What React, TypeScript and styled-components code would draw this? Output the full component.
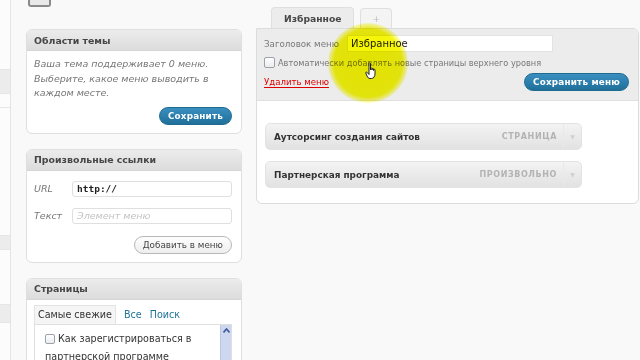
import styled, { createGlobalStyle, css } from 'styled-components';

const GlobalStyle = createGlobalStyle`
  html, body {
    margin: 0;
    padding: 0;
    background: #f9f9f9;
  }
  body {
    font-family: "DejaVu Sans", "Liberation Sans", sans-serif;
    color: #333;
  }
  * {
    box-sizing: border-box;
  }
`;

const Page = styled.div`
  position: relative;
  width: 640px;
  height: 360px;
  overflow: hidden;
  display: flex;
  background: #f9f9f9;
`;

// обрезанное левое меню админки
const AdminMenu = styled.div`
  width: 11px;
  flex-shrink: 0;
  display: flex;
  flex-direction: column;
  background: #fcfcfc;
  border-right: 1px solid #e4e4e4;
`;

const MenuItem = styled.div<{ h: number; dark?: boolean }>`
  height: ${({ h }) => h}px;
  flex-shrink: 0;
  border-bottom: 1px solid #e6e6e6;
  ${({ dark }) =>
    dark &&
    css`
      background: #ececec;
    `}
`;

const Columns = styled.div`
  flex: 1;
  padding-left: 15px;
  display: flex;
  gap: 14px;
`;

const LeftColumn = styled.div`
  width: 216px;
  display: flex;
  flex-direction: column;
  gap: 15px;
`;

// иконка заголовка страницы, видна только нижняя часть
const HeadingIcon = styled.div`
  width: 23px;
  height: 7px;
  flex-shrink: 0;
  margin-left: 2px;
  margin-bottom: 7px;
  border: 2px solid #8a8a8a;
  border-top: none;
  border-radius: 0 0 3px 3px;
  background: #e9e9e9;
`;

const Box = styled.div`
  flex-shrink: 0;
  border: 1px solid #dfdfdf;
  border-radius: 6px;
  background: #fff;
  overflow: hidden;
`;

const BoxHeader = styled.div`
  height: 21px;
  padding: 0 7px;
  display: flex;
  align-items: center;
  background: linear-gradient(#ececec, #dcdcdc);
  border-bottom: 1px solid #d6d6d6;
  font-size: 9.4px;
  font-weight: bold;
  color: #464646;
`;

const BoxBody = styled.div<{ pad: string }>`
  padding: ${({ pad }) => pad};
  display: flex;
  flex-direction: column;
`;

const Note = styled.p`
  margin: 0;
  font-size: 9.5px;
  line-height: 14.5px;
  font-style: italic;
  color: #777;
`;

const ButtonRow = styled.div<{ top: number }>`
  display: flex;
  justify-content: flex-end;
  margin-top: ${({ top }) => top}px;
`;

const Button = styled.button<{ primary?: boolean }>`
  height: 18px;
  padding: 0 8px;
  border-radius: 10px;
  font-family: inherit;
  font-size: 8.8px;
  display: flex;
  align-items: center;
  ${({ primary }) =>
    primary
      ? css`
          background: linear-gradient(#3a8fc0, #1f6f99);
          border: 1px solid #1f6a91;
          color: #fff;
          font-weight: bold;
          letter-spacing: 0.2px;
        `
      : css`
          background: linear-gradient(#fefefe, #eeeeee);
          border: 1px solid #b8b8b8;
          color: #464646;
        `}
`;

const FieldRow = styled.div`
  display: flex;
  align-items: center;
  height: 16px;
  & + & {
    margin-top: 11px;
  }
`;

const FieldLabel = styled.span`
  width: 38px;
  font-size: 9.5px;
  font-style: italic;
  color: #777;
`;

const Field = styled.div<{ mono?: boolean; placeholder?: boolean }>`
  flex: 1;
  height: 16px;
  border: 1px solid #dfdfdf;
  border-radius: 3px;
  display: flex;
  align-items: center;
  padding: 0 4px;
  font-size: 9.5px;
  ${({ mono }) =>
    mono &&
    css`
      font-family: "DejaVu Sans Mono", monospace;
      font-weight: bold;
      color: #222;
    `}
  ${({ placeholder }) =>
    placeholder &&
    css`
      font-style: italic;
      color: #c3c3c3;
    `}
`;

const Tabs = styled.div`
  display: flex;
  align-items: flex-end;
  gap: 8px;
  height: 19px;
  font-size: 9.6px;
`;

const PageTab = styled.span<{ active?: boolean }>`
  height: 19px;
  display: flex;
  align-items: center;
  color: #21759b;
  ${({ active }) =>
    active &&
    css`
      color: #333;
      padding: 0 3px;
      background: #f5f5f5;
      border: 1px solid #e3e3e3;
      border-bottom: none;
    `}
`;

const PageList = styled.div`
  position: relative;
  height: 60px;
  border: 1px solid #dfdfdf;
  padding: 5px 14px 0 10px;
  font-size: 9.6px;
  line-height: 18px;
  color: #333;
`;

const CheckBox = styled.span<{ size: number }>`
  display: inline-block;
  width: ${({ size }) => size}px;
  height: ${({ size }) => size}px;
  border: 1px solid #9aa3ab;
  border-radius: 2px;
  background: linear-gradient(#fff, #ececec);
  vertical-align: middle;
  flex-shrink: 0;
`;

const ScrollBar = styled.div`
  position: absolute;
  top: 0;
  right: 0;
  width: 11px;
  height: 100%;
  background: #cdd7ef;
  border-left: 1px solid #b9c6e6;
  display: flex;
  justify-content: center;
  padding-top: 3px;
`;

// правая часть: редактор меню
const RightColumn = styled.div`
  width: 383px;
  display: flex;
  flex-direction: column;
`;

const MenuTabs = styled.div`
  display: flex;
  align-items: flex-end;
  gap: 6px;
  padding-left: 15px;
  height: 28px;
`;

const MenuTab = styled.div<{ active?: boolean }>`
  height: ${({ active }) => (active ? 22 : 20)}px;
  padding: 0 ${({ active }) => (active ? 12 : 11)}px;
  display: flex;
  align-items: center;
  border: 1px solid #dfdfdf;
  border-bottom: none;
  border-radius: 4px 4px 0 0;
  font-size: 9.2px;
  ${({ active }) =>
    active
      ? css`
          background: #ececec;
          font-weight: bold;
          color: #464646;
          margin-bottom: -1px;
        `
      : css`
          background: #f4f4f4;
          color: #bbb;
        `}
`;

const Panel = styled.div`
  border: 1px solid #dcdcdc;
  border-radius: 0 6px 6px 6px;
  background: #fff;
  overflow: hidden;
`;

const PanelHeader = styled.div`
  background: #ececec;
  border-bottom: 1px solid #dfdfdf;
  padding: 6px 9px 9px 7px;
  display: flex;
  flex-direction: column;
`;

const TitleRow = styled.div`
  display: flex;
  align-items: center;
  gap: 8px;
  font-size: 8.7px;
  color: #777;
`;

const TitleInput = styled.div`
  width: 206px;
  height: 17px;
  background: #fff;
  border: 1px solid #e2e2e2;
  display: flex;
  align-items: center;
  padding: 0 3px;
  font-size: 10px;
  color: #222;
`;

const AutoRow = styled.label`
  display: flex;
  align-items: center;
  gap: 3px;
  margin-top: 5px;
  font-size: 8.2px;
  color: #777;
`;

const ActionRow = styled.div`
  display: flex;
  justify-content: space-between;
  align-items: center;
  margin-top: 5px;
`;

const DeleteLink = styled.a`
  font-size: 8.6px;
  color: #d00;
  text-decoration: underline;
  text-underline-offset: 2px;
`;

const PanelBody = styled.div`
  padding: 22px 0 15px 8px;
  display: flex;
  flex-direction: column;
  gap: 11px;
`;

const Item = styled.div`
  width: 317px;
  height: 27px;
  display: flex;
  align-items: center;
  padding-left: 8px;
  border: 1px solid #e3e3e3;
  border-radius: 5px;
  background: linear-gradient(#f3f3f3, #e2e2e2);
`;

const ItemTitle = styled.span`
  flex: 1;
  font-size: 8.9px;
  font-weight: bold;
  color: #333;
`;

const ItemType = styled.span`
  font-size: 8px;
  font-weight: bold;
  letter-spacing: 0.6px;
  color: #b3b3b3;
  padding-right: 6px;
`;

const ItemArrow = styled.span`
  width: 18px;
  height: 100%;
  border-left: 1px solid #e9e9e9;
  display: flex;
  align-items: center;
  justify-content: center;
  color: #cfcfcf;
  font-size: 6px;
`;

// подсветка курсора из видео
const Spotlight = styled.div`
  position: absolute;
  left: 328px;
  top: 23px;
  width: 80px;
  height: 80px;
  border-radius: 50%;
  background: radial-gradient(
    circle,
    rgba(245, 245, 0, 1) 0%,
    rgba(245, 245, 0, 0.95) 60%,
    rgba(245, 245, 20, 0) 74%
  );
  mix-blend-mode: multiply;
  pointer-events: none;
`;

const Cursor = styled.svg`
  position: absolute;
  left: 365px;
  top: 62px;
`;

const items = [
  { title: 'Аутсорсинг создания сайтов', type: 'СТРАНИЦА' },
  { title: 'Партнерская программа', type: 'ПРОИЗВОЛЬНО' },
];

const App = () => {
  return (
    <Page>
      <GlobalStyle />
      <AdminMenu>
        <MenuItem h={70} />
        <MenuItem h={24} dark />
        <MenuItem h={14} />
        <MenuItem h={128} />
        <MenuItem h={14} dark />
        <MenuItem h={55} />
        <MenuItem h={18} dark />
      </AdminMenu>

      <Columns>
        <LeftColumn>
          <HeadingIcon />

          <Box>
            <BoxHeader>Области темы</BoxHeader>
            <BoxBody pad="6px 9px 8px 7px">
              <Note>
                Ваша тема поддерживает 0 меню.
                <br />
                Выберите, какое меню выводить в
                <br />
                каждом месте.
              </Note>
              <ButtonRow top={6}>
                <Button primary>Сохранить</Button>
              </ButtonRow>
            </BoxBody>
          </Box>

          <Box>
            <BoxHeader>Произвольные ссылки</BoxHeader>
            <BoxBody pad="10px 9px 8px 7px">
              <FieldRow>
                <FieldLabel>URL</FieldLabel>
                <Field mono>http://</Field>
              </FieldRow>
              <FieldRow>
                <FieldLabel>Текст</FieldLabel>
                <Field placeholder>Элемент меню</Field>
              </FieldRow>
              <ButtonRow top={12}>
                <Button>Добавить в меню</Button>
              </ButtonRow>
            </BoxBody>
          </Box>

          <Box>
            <BoxHeader>Страницы</BoxHeader>
            <BoxBody pad="5px 9px 10px 7px">
              <Tabs>
                <PageTab active>Самые свежие</PageTab>
                <PageTab>Все</PageTab>
                <PageTab>Поиск</PageTab>
              </Tabs>
              <PageList>
                <CheckBox size={10} /> Как зарегистрироваться в
                <br />
                партнерской программе
                <ScrollBar>
                  <svg width="7" height="5" viewBox="0 0 7 5">
                    <path d="M0.5 4.5 L3.5 1 L6.5 4.5" fill="none" stroke="#3b5b9a" strokeWidth="1.6" />
                  </svg>
                </ScrollBar>
              </PageList>
            </BoxBody>
          </Box>
        </LeftColumn>

        <RightColumn>
          <MenuTabs>
            <MenuTab active>Избранное</MenuTab>
            <MenuTab>+</MenuTab>
          </MenuTabs>
          <Panel>
            <PanelHeader>
              <TitleRow>
                Заголовок меню
                <TitleInput>Избранное</TitleInput>
              </TitleRow>
              <AutoRow>
                <CheckBox size={11} />
                Автоматически добавлять новые страницы верхнего уровня
              </AutoRow>
              <ActionRow>
                <DeleteLink>Удалить меню</DeleteLink>
                <Button primary>Сохранить меню</Button>
              </ActionRow>
            </PanelHeader>
            <PanelBody>
              {items.map((item) => (
                <Item key={item.title}>
                  <ItemTitle>{item.title}</ItemTitle>
                  <ItemType>{item.type}</ItemType>
                  <ItemArrow>▼</ItemArrow>
                </Item>
              ))}
            </PanelBody>
          </Panel>
        </RightColumn>
      </Columns>

      <Spotlight />
      <Cursor width="14" height="18" viewBox="0 0 14 18">
        <path
          d="M4 1.5 C4 0.7 5.5 0.7 5.5 1.5 L5.5 8 L5.5 6.5 C5.5 5.7 7 5.7 7 6.5 L7 8 L7 7 C7 6.2 8.5 6.2 8.5 7 L8.5 8.5 L8.5 7.8 C8.5 7 10 7 10 7.8 L10 12 C10 14.5 8.5 16.5 6.5 16.5 L5 16.5 C3.5 16.5 2.8 15.5 2 14 L0.8 11 C0.5 10.2 1.6 9.6 2.2 10.4 L4 12.5 Z"
          fill="#fff"
          stroke="#222"
          strokeWidth="1"
          strokeLinejoin="round"
        />
      </Cursor>
    </Page>
  );
};

export default App;
